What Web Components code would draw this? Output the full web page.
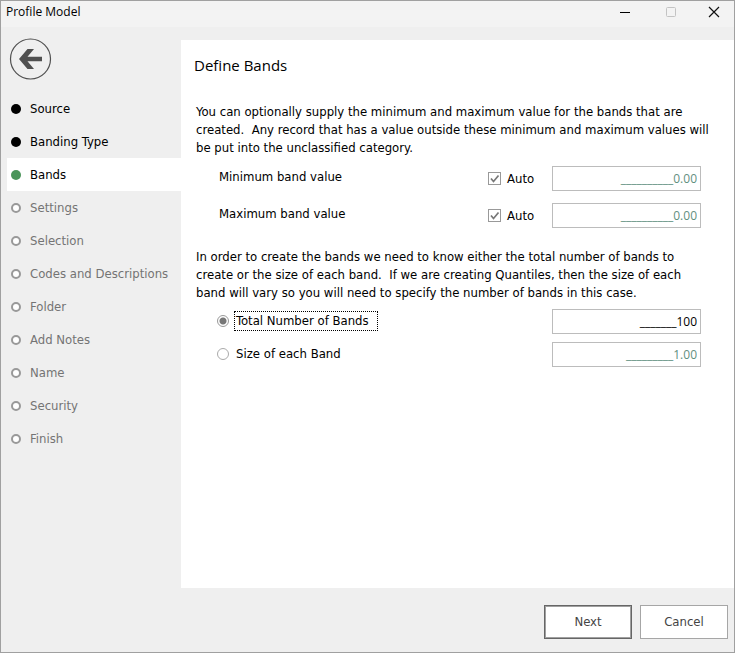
<!DOCTYPE html>
<html lang="en">
<head>
<meta charset="utf-8">
<title>Profile Model</title>
<style>
  html {
    height: 100%;
  }
  body {
    margin: 0;
    min-height: 100%;
    display: grid;
    grid-template-columns: minmax(0, 1fr);
    font-family: "DejaVu Sans Condensed", "Open Sans", sans-serif;
    font-size: 13px;
    line-height: 18px;
    color: #000;
  }
  p {
    margin: 0 0 0 15px;
    white-space: nowrap;
  }
</style>
</head>
<body>
<wizard-window caption="Profile Model">
  <wizard-steps slot="steps">
    <wizard-step state="done">Source</wizard-step>
    <wizard-step state="done">Banding Type</wizard-step>
    <wizard-step state="current">Bands</wizard-step>
    <wizard-step>Settings</wizard-step>
    <wizard-step>Selection</wizard-step>
    <wizard-step>Codes and Descriptions</wizard-step>
    <wizard-step>Folder</wizard-step>
    <wizard-step>Add Notes</wizard-step>
    <wizard-step>Name</wizard-step>
    <wizard-step>Security</wizard-step>
    <wizard-step>Finish</wizard-step>
  </wizard-steps>

  <wizard-page heading="Define Bands">
    <p>You can optionally supply the minimum and maximum value for the bands that are<br>
      created.&nbsp; Any record that has a value outside these minimum and maximum values will<br>
      be put into the unclassified category.</p>
    <band-limits></band-limits>
    <p>In order to create the bands we need to know either the total number of bands to<br>
      create or the size of each band.&nbsp; If we are creating Quantiles, then the size of each<br>
      band will vary so you will need to specify the number of bands in this case.</p>
    <band-division></band-division>
  </wizard-page>

  <wizard-button slot="actions" primary>Next</wizard-button>
  <wizard-button slot="actions">Cancel</wizard-button>
</wizard-window>

<script>
const inputStyles = `
  .value {
    box-sizing: border-box;
    width: 149px;
    height: 25px;
    margin: 0;
    padding: 0 3px;
    border: 1px solid #bcbcbc;
    border-radius: 0;
    background: #fff;
    color: #000;
    font-family: "Open Sans", sans-serif;
    font-size: 12px;
    text-align: right;
    outline: none;
  }
  .value:disabled {
    color: #5f8f80;
  }
`;

class WizardWindow extends HTMLElement {

  constructor() {
    super();
    this.attachShadow({mode: 'open'});
  }

  connectedCallback() {
    this.shadowRoot.innerHTML = `
      <style>
        :host {
          display: flex;
          flex-direction: column;
          border: 1px solid #a0a0a0;
          background: #efefef;
        }
        header {
          display: flex;
          justify-content: space-between;
          height: 26px;
          padding-left: 5px;
          background: #f3f3f3;
        }
        h1 {
          margin: 0;
          font-family: "Open Sans", sans-serif;
          font-size: 12px;
          font-weight: normal;
          line-height: 22px;
        }
        .controls {
          display: flex;
        }
        .controls button {
          display: grid;
          place-items: center;
          width: 46px;
          height: 22px;
          padding: 0;
          border: 0;
          background: none;
        }
        .controls button:last-child {
          width: 40px;
        }
        .body {
          flex: 1;
          display: grid;
          grid-template-columns: 180px minmax(0, 1fr);
        }
        .page {
          display: grid;
          grid-template-columns: minmax(0, 1fr);
          margin-top: 13px;
        }
        .back {
          display: block;
          margin: 11px 0 12px 8px;
          padding: 0;
          border: 0;
          background: none;
        }
        svg {
          display: block;
        }
        footer {
          display: flex;
          justify-content: flex-end;
          gap: 8px;
          padding: 17px 6px 13px;
        }
      </style>

      <header>
        <h1>${this.getAttribute('caption')}</h1>
        <div class="controls">
          <button type="button" aria-label="Minimize">
            <svg width="12" height="12"><path d="M1 6.5h10" stroke="#000"/></svg>
          </button>
          <button type="button" aria-label="Maximize" disabled>
            <svg width="12" height="12"><rect x="1.5" y="1.5" width="9" height="9" rx="1" fill="none" stroke="#c3c3c3"/></svg>
          </button>
          <button type="button" aria-label="Close">
            <svg width="12" height="12"><path d="M1 1l10 10M11 1L1 11" stroke="#111" stroke-width="1.2"/></svg>
          </button>
        </div>
      </header>
      <div class="body">
        <nav>
          <button class="back" type="button" aria-label="Back">
            <svg width="44" height="42" viewBox="0 0 44 42">
              <circle cx="21.5" cy="21" r="20" fill="none" stroke="#505050" stroke-width="1.2"/>
              <path d="M10 21L18.5 11H25l-6.500 7.800H33v4.400H18.500L25 31h-6.500z" fill="#505050"/>
            </svg>
          </button>
          <slot name="steps"></slot>
        </nav>
        <main class="page"><slot></slot></main>
      </div>
      <footer><slot name="actions"></slot></footer>
    `;
  }
}

class WizardSteps extends HTMLElement {

  constructor() {
    super();
    this.attachShadow({mode: 'open'}).innerHTML = `
      <style>
        :host {
          display: flex;
          flex-direction: column;
          padding-left: 6px;
        }
      </style>
      <slot></slot>
    `;
  }
}

class WizardStep extends HTMLElement {

  constructor() {
    super();
    this.attachShadow({mode: 'open'}).innerHTML = `
      <style>
        :host {
          display: flex;
          align-items: center;
          gap: 9px;
          height: 33px;
          padding-left: 4px;
          color: #747474;
        }
        :host([state]) {
          color: #000;
        }
        :host([state="current"]) {
          background: #fff;
        }
        .dot {
          box-sizing: border-box;
          width: 10px;
          height: 10px;
          border: 2px solid #999;
          border-radius: 50%;
          background: #fff;
        }
        :host([state]) .dot {
          border: 0;
          background: #000;
        }
        :host([state="current"]) .dot {
          background: #4a9459;
        }
      </style>
      <span class="dot"></span>
      <slot></slot>
    `;
  }
}

class WizardPage extends HTMLElement {

  constructor() {
    super();
    this.attachShadow({mode: 'open'});
  }

  connectedCallback() {
    this.shadowRoot.innerHTML = `
      <style>
        :host {
          display: block;
          padding: 14px 33px 14px 0;
          background: #fff;
        }
        h2 {
          margin: 0 0 26px 13px;
          font-family: "Open Sans", sans-serif;
          font-size: 15px;
          font-weight: normal;
          line-height: 23px;
        }
      </style>
      <h2>${this.getAttribute('heading')}</h2>
      <slot></slot>
    `;
  }
}

class BandLimits extends HTMLElement {

  constructor() {
    super();
    this.attachShadow({mode: 'open'}).innerHTML = `
      <style>
        ${inputStyles}
        :host {
          display: grid;
          gap: 12px;
          margin: 9px 0 20px 38px;
        }
        .row {
          display: grid;
          grid-template-columns: 1fr 64px 149px;
          align-items: center;
        }
        .name {
          padding-bottom: 4px;
        }
        .auto {
          display: flex;
          align-items: center;
          gap: 6px;
        }
        .auto input {
          appearance: none;
          box-sizing: border-box;
          width: 13px;
          height: 13px;
          margin: 0;
          border: 1px solid #999;
          background: #fff;
        }
        .tick {
          display: grid;
        }
        .tick > * {
          grid-area: 1 / 1;
        }
        .tick svg {
          pointer-events: none;
          visibility: hidden;
        }
        .auto input:checked + svg {
          visibility: visible;
        }
      </style>
      ${this.row('minimum', 'Minimum band value')}
      ${this.row('maximum', 'Maximum band value')}
    `;
  }

  row(id, name) {
    return `
      <div class="row">
        <label class="name" for="${id}">${name}</label>
        <label class="auto">
          <span class="tick">
            <input type="checkbox" checked>
            <svg width="13" height="13"><path d="M3 6.5l2.5 3 5-6" fill="none" stroke="#777" stroke-width="1.7"/></svg>
          </span>
          Auto
        </label>
        <input class="value" id="${id}" type="text" value="__________0.00" disabled>
      </div>
    `;
  }
}

class BandDivision extends HTMLElement {

  constructor() {
    super();
    // both radios share this root so that they form one group
    this.attachShadow({mode: 'open'}).innerHTML = `
      <style>
        ${inputStyles}
        :host {
          display: grid;
          gap: 8px;
          margin: 7px 0 0 36px;
        }
        .row {
          display: grid;
          grid-template-columns: 1fr 149px;
          align-items: center;
        }
        .choice {
          display: flex;
          align-items: center;
          gap: 5px;
          padding-bottom: 1px;
        }
        .choice input {
          appearance: none;
          box-sizing: border-box;
          width: 12px;
          height: 12px;
          margin: 0;
          border: 1px solid #aaa;
          border-radius: 50%;
          background: #fff;
          outline: none;
        }
        .choice input:checked {
          border-color: #999;
          background: radial-gradient(circle, #777 3px, #fff 4px);
        }
        .choice span {
          padding: 0 1px;
          border: 1px solid transparent;
        }
        .choice input:checked + span {
          padding-right: 8px;
          border: 1px dotted #000;
        }
      </style>
      <div class="row">
        <label class="choice"><input type="radio" name="division" checked><span>Total Number of Bands</span></label>
        <input class="value" type="text" value="_______100" aria-label="Total Number of Bands">
      </div>
      <div class="row">
        <label class="choice"><input type="radio" name="division"><span>Size of each Band</span></label>
        <input class="value" type="text" value="_________1.00" aria-label="Size of each Band" disabled>
      </div>
    `;
  }
}

class WizardButton extends HTMLElement {

  constructor() {
    super();
    this.attachShadow({mode: 'open'}).innerHTML = `
      <style>
        :host {
          display: block;
        }
        button {
          box-sizing: border-box;
          width: 88px;
          height: 34px;
          padding: 0;
          border: 1px solid #a6a6a6;
          background: #fff;
          color: #444;
          font: inherit;
        }
        :host([primary]) button {
          border-color: #666;
          box-shadow: inset 0 0 0 1px #a0a0a0;
        }
      </style>
      <button type="button"><slot></slot></button>
    `;
  }
}

customElements.define('wizard-window', WizardWindow);
customElements.define('wizard-steps', WizardSteps);
customElements.define('wizard-step', WizardStep);
customElements.define('wizard-page', WizardPage);
customElements.define('band-limits', BandLimits);
customElements.define('band-division', BandDivision);
customElements.define('wizard-button', WizardButton);
</script>
</body>
</html>
